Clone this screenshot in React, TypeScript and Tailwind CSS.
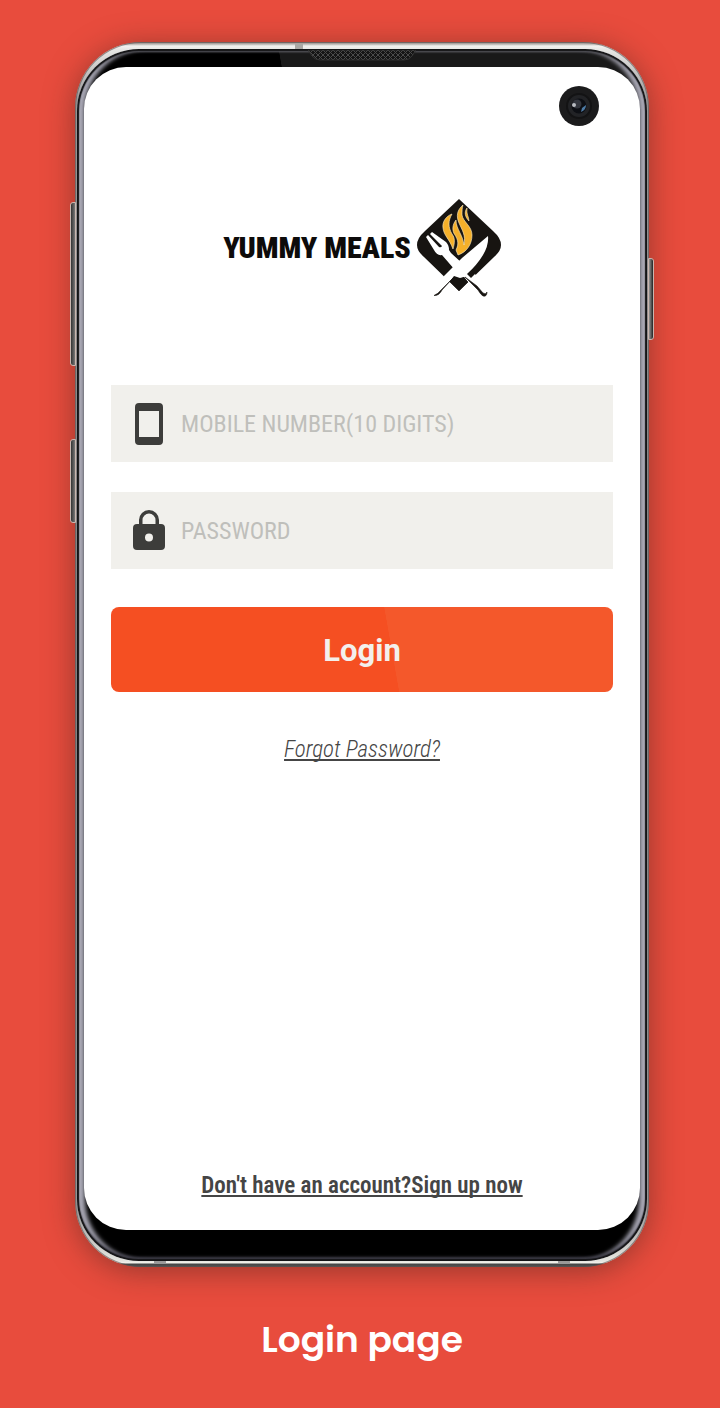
import type { ReactNode } from "react";

function BrandMark() {
  return (
    <svg viewBox="0 0 84 100" className="h-[100px] w-[84px] shrink-0" aria-hidden="true">
      <path
        d="M42 1 L76 33 Q84 40 84 47 Q84 53 77 59 L42 93 L7 59 Q0 53 0 47 Q0 40 8 33 Z"
        fill="#171411"
      />
      <g fill="#f5b02a" stroke="#fff0c8" strokeWidth="0.6" strokeLinejoin="round">
        <path d="M35 16 C29 18 25 24 26 30 C27 38 32 40 36 51 C38 44 38 40 35 36 C31 29 31 23 35 16 Z" />
        <path d="M46 7 C40 12 39 18 42 25 C45 32 49 37 47 47 C46 37 39 31 39 22 C35 27 35 33 38 37 C41 42 42 46 39 52 L41 57 C50 54 55 46 55 37 C55 28 46 24 45 17 C45 13 45 10 46 7 Z" />
        <path d="M50 10 C47 14 48 19 52 23 C52 19 49 16 50 10 Z" />
      </g>
      <path
        d="M9 39 L11 37 L22 49 Q24 50 25 48 L13 36 L15 34 L29 44 Q32 47 32 52 L34 55 L46 66 L38 72 L25 57 Q20 58 17 52 Z"
        fill="#fff"
      />
      <path
        d="M71 38 Q72 47 66 57 Q60 67 50 76 L54 80 L58 76 L70 92 L66 96 L50 83 L47 79 L43 80 L37 78 L34 82 L18 98 L14 94 L27 80 L27 78 L45 60 Z"
        fill="#fff"
      />
      <path d="M37 79 L40 80 L45 80 L47 79 L51 84 L42 93 L33 84 Z" fill="#171411" />
      <path
        d="M36 80 L25 92 Q22 98 17 97.500 Q21 96 24 92 Z M48 79 L60 88 L66 95 Q69 97 70 94 Q70 99 66 98 Q64 97 61 92 Z"
        fill="#171411"
        stroke="#171411"
        strokeWidth="0.6"
        strokeLinejoin="round"
      />
    </svg>
  );
}

function PhoneIcon() {
  return (
    <svg viewBox="0 0 28 44" className="h-[44px] w-[28px]" aria-hidden="true">
      <path
        fillRule="evenodd"
        d="M4 1h20a4 4 0 0 1 4 4v34a4 4 0 0 1-4 4H4a4 4 0 0 1-4-4V5a4 4 0 0 1 4-4Zm0 8v26h20V9Z"
        fill="#3d3d3b"
      />
    </svg>
  );
}

function LockIcon() {
  return (
    <svg viewBox="0 0 32 42" className="h-[42px] w-[32px]" aria-hidden="true">
      <path
        fillRule="evenodd"
        d="M6 14v-4a10 10 0 0 1 20 0v4h2a4 4 0 0 1 4 4v18a4 4 0 0 1-4 4H4a4 4 0 0 1-4-4V18a4 4 0 0 1 4-4Zm3.500 0h13v-4a6.500 6.500 0 0 0-13 0Zm6.500 9.500a4 4 0 1 0 0 8 4 4 0 0 0 0-8Z"
        fill="#3d3d3b"
      />
    </svg>
  );
}

function Field({
  id,
  label,
  type,
  icon,
}: {
  id: string;
  label: string;
  type: string;
  icon: ReactNode;
}) {
  return (
    <div className="flex h-[77px] items-center bg-[#f1f0ec] pl-[22px]">
      <label htmlFor={id} className="flex w-8 shrink-0 justify-center" aria-label={label}>
        {icon}
      </label>
      <input
        id={id}
        type={type}
        placeholder={label}
        className="h-full min-w-0 flex-1 bg-transparent pl-4 text-[24px] text-[#3d3d3b] outline-none placeholder:text-[#bfbfbb]"
      />
    </div>
  );
}

function Camera() {
  return (
    <svg
      viewBox="0 0 40 40"
      className="absolute top-[19px] right-[41px] size-10"
      aria-hidden="true"
    >
      <circle cx="20" cy="20" r="20" fill="#1b1b1c" />
      <circle cx="20" cy="20" r="13" fill="#131314" />
      <circle cx="20" cy="20" r="11" fill="#222326" />
      <circle cx="20" cy="20" r="7.500" fill="#0d0f14" />
      <circle cx="18" cy="18" r="4.500" fill="#33363e" />
      <circle cx="15" cy="19" r="2" fill="#b9bcc2" />
      <path d="M22 26 Q27 24 27 19 L23 22 Z" fill="#4d7ba6" />
    </svg>
  );
}

function Speaker() {
  return (
    <svg
      viewBox="0 0 108 11"
      className="absolute top-[8px] left-1/2 h-[11px] w-[108px] -translate-x-1/2"
      aria-hidden="true"
    >
      <defs>
        <pattern id="mesh" width="5" height="5" patternUnits="userSpaceOnUse">
          <rect width="5" height="5" fill="#151515" />
          <path d="M0 0 L5 5 M5 0 L0 5" stroke="#4a4a4a" strokeWidth="1" />
        </pattern>
      </defs>
      <path d="M0 0H108L104 6Q101 10 96 10H12Q7 10 4 6Z" fill="url(#mesh)" stroke="#333" />
    </svg>
  );
}

export default function App() {
  return (
    <main className="flex min-h-screen flex-col bg-[#e84c3d] pt-[42px] pr-[71px] pl-[75px] font-['Roboto_Condensed','Liberation_Sans_Narrow',Roboto,sans-serif]">
      <div className="relative flex flex-1 flex-col rounded-[66px] bg-[linear-gradient(to_bottom,#8a7773_0,#b5b1ae_2px,#f2f2f0_4px,#e8e8e6_7px,#969494_60px,#807e80_50%,#969494_calc(100%-60px),#e5e5e0_calc(100%-6px),#f2f2ec_calc(100%-4px),#444_calc(100%-3px),#555_100%)] px-[2px] pt-[7px] pb-[6px] shadow-[0_4px_30px_rgba(70,35,30,0.5),inset_0_0_0_1px_rgba(90,80,78,0.6)]">
        <span className="absolute top-[160px] -left-[5px] h-[164px] w-[6px] rounded-l-[3px] border border-[#c9b5ae] bg-[linear-gradient(to_right,#333,#777)]" />
        <span className="absolute top-[397px] -left-[5px] h-[84px] w-[6px] rounded-l-[3px] border border-[#c9b5ae] bg-[linear-gradient(to_right,#333,#777)]" />
        <span className="absolute top-[216px] -right-[5px] h-[82px] w-[6px] rounded-r-[3px] border border-[#c9b5ae] bg-[linear-gradient(to_right,#999,#222)]" />
        <span className="absolute top-[2px] left-[220px] h-[5px] w-[8px] bg-[#aaa8a5]" />
        <span className="absolute bottom-[3px] left-[79px] h-[3px] w-[12px] bg-[#999]" />
        <span className="absolute right-[79px] bottom-[3px] h-[3px] w-[12px] bg-[#999]" />
        <Speaker />

        <div className="flex flex-1 flex-col rounded-[62px] bg-black bg-[linear-gradient(80deg,#000_36.500%,#191919_36.600%)] bg-[length:100%_60px] bg-no-repeat px-[7px] pt-[18px] pb-[31px] shadow-[inset_0_0_1px_2px_#141416,inset_0_3px_2px_#55555c,inset_0_-4px_3px_#3c3b46,inset_8px_0_4px_#a9a8b5,inset_-8px_0_4px_#a9a8b5]">
          <section className="relative flex flex-1 flex-col rounded-[42px] bg-white px-[27px] pt-[131px] pb-[28px]">
            <Camera />
            <header className="flex items-center justify-center gap-[6px]">
              <h1 className="text-[30px] leading-none font-black whitespace-nowrap text-[#0d0b0a]">
                YUMMY MEALS
              </h1>
              <BrandMark />
            </header>

            <form className="mt-[87px] flex flex-col" onSubmit={(e) => e.preventDefault()}>
              <div className="flex flex-col gap-[30px]">
                <Field id="mobile" type="tel" label="MOBILE NUMBER(10 DIGITS)" icon={<PhoneIcon />} />
                <Field id="password" type="password" label="PASSWORD" icon={<LockIcon />} />
              </div>
              <button
                type="submit"
                className="mt-[38px] h-[85px] rounded-lg bg-[linear-gradient(80deg,#f54f22_55.700%,#f4582b_55.800%)] pt-1 font-[Roboto,sans-serif] text-[31px] font-bold text-[#f3f0ec]"
              >
                Login
              </button>
            </form>

            <a
              href="#forgot"
              className="mt-10 self-center text-[23px] leading-9 font-light text-[#454545] italic underline decoration-2 underline-offset-2 [text-decoration-skip-ink:none]"
            >
              Forgot Password?
            </a>
            <a
              href="#signup"
              className="mt-auto self-center text-[23px] leading-8 font-semibold whitespace-nowrap text-[#454545] underline decoration-2 underline-offset-2 [text-decoration-skip-ink:none]"
            >
              Don't have an account?Sign up now
            </a>
          </section>
        </div>
      </div>
      <h2 className="flex h-[141px] items-center justify-center pt-1 font-[Poppins,Inter,sans-serif] text-[36px] font-semibold text-white">
        Login page
      </h2>
    </main>
  );
}
